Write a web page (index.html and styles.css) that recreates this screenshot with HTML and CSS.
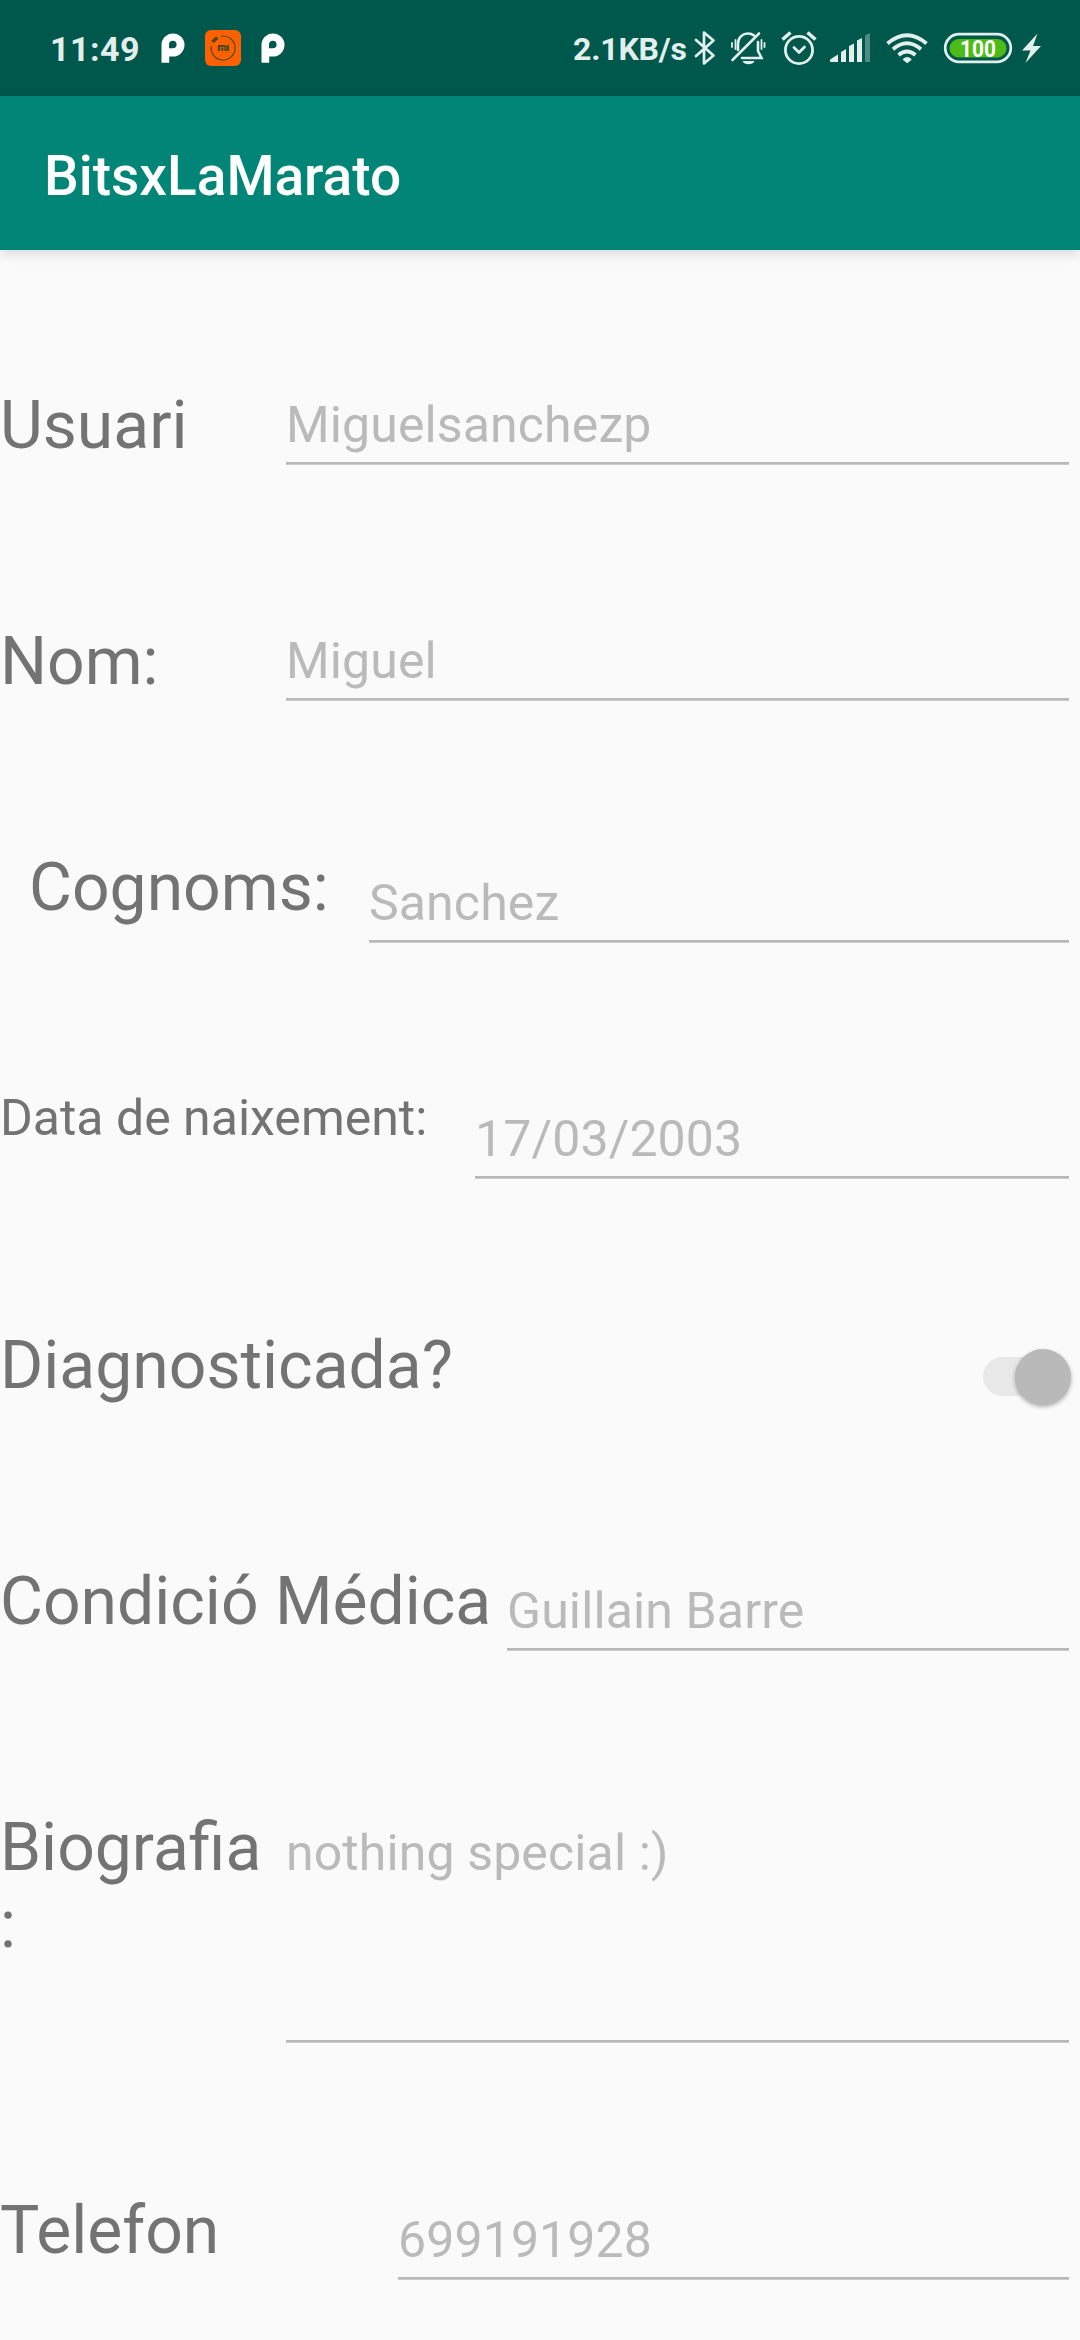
FILE: index.html
```html
<!DOCTYPE html>
<html lang="ca">
<head>
<meta charset="utf-8">
<title>BitsxLaMarato</title>
<link rel="stylesheet" href="styles.css">
</head>
<body>
<header class="status">
  <div class="status-left">
    <span class="clock">11:49</span>
    <svg class="icon" width="50" height="96" viewBox="150 0 50 96"><path fill="#fff" fill-rule="evenodd" d="M161.500 62.800V45a11.500 11.500 0 1 1 11.500 11.500h-3.800v6.300zM172.800 40.700a3.800 3.800 0 0 0-3.800 3.800v3.800h3.800a3.800 3.800 0 0 0 0-7.600z"/></svg>
    <svg class="icon" width="50" height="96" viewBox="200 0 50 96"><rect x="205" y="30" width="36" height="36" rx="6" fill="#ff6100"/><g fill="none" stroke="#4c4a20"><path stroke-width="1.200" d="M221 36.200A12 12 0 1 1 211.300 46"/><path stroke-width="3.400" d="M212.500 42l4.800-4.500"/><path stroke-width="2.200" d="M219 51v-5h5.500q1 0 1 1v4M222.300 47.500v3.500M228 45v6"/></g></svg>
    <svg class="icon" width="50" height="96" viewBox="250 0 50 96"><path fill="#fff" fill-rule="evenodd" d="M261.500 62.800V45a11.500 11.500 0 1 1 11.500 11.500h-3.800v6.300zM272.800 40.700a3.800 3.800 0 0 0-3.800 3.800v3.800h3.800a3.800 3.800 0 0 0 0-7.600z"/></svg>
  </div>
  <div class="status-right">
    <span class="speed">2.1KB/s</span>
    <svg class="icon" width="34" height="96" viewBox="688 0 34 96"><path fill="none" stroke="#e2efed" stroke-width="2.700" stroke-linejoin="round" stroke-linecap="round" d="M696 40l17.500 15.500-9.500 8V32.500l9.500 8L696 56"/></svg>
    <svg class="icon" width="52" height="96" viewBox="722 0 52 96"><g fill="none" stroke="#e2efed" stroke-width="2.600" stroke-linecap="round"><path d="M732.500 60l26.500-26.500M738 50v-6c0-7 5-10.500 10-10.500 2.500 0 4.500.7 6 2M758 42v9l3.500 7H742"/><path stroke-width="1.800" d="M735.500 40v9M732 43v4M761.500 40v9M764.500 43v4"/></g><path fill="#e2efed" d="M742.500 61h12q-1.500 3.300-6 3.300t-6-3.300z"/></svg>
    <svg class="icon" width="52" height="96" viewBox="774 0 52 96"><g fill="none" stroke="#e2efed" stroke-width="2.800"><circle cx="799" cy="50" r="13.600"/><path stroke-linecap="round" stroke-linejoin="round" d="M794 47.500l5 5 5.500-5.500"/><path stroke-width="3.600" d="M782.500 39.500l8-7M807.500 32.500l8 7"/></g></svg>
    <svg class="icon" width="52" height="96" viewBox="826 0 52 96"><g fill="#e2efed"><path d="M830 62v-2.500l8-5V62zM841 62V52l5-3v13zM849 62V46l5-2.500V62zM857 62V40.500l5-2.500v24z"/><path opacity=".35" d="M865 62V35.500l5-2.500v29z"/></g></svg>
    <svg class="icon" width="56" height="96" viewBox="878 0 56 96"><g fill="none" stroke="#e2efed" stroke-width="3.800"><path d="M887.500 43.500q19.500-16.500 39 0M893 49.200q14-12 28 0M898.500 55q8.500-7 17 0"/></g><path fill="#e2efed" d="M903 59q4.200-4 8.400 0v1l-4.200 3.300-4.200-3.300z"/></svg>
    <svg class="icon" width="84" height="96" viewBox="934 0 84 96"><rect x="945.200" y="34.200" width="65.600" height="27.600" rx="13.800" fill="none" stroke="#e2efed" stroke-width="2.700"/><rect x="949.500" y="39" width="57" height="18.500" rx="9.250" fill="#4cbb17"/><text class="charge" x="960" y="56.900" textLength="36" lengthAdjust="spacingAndGlyphs">100</text></svg>
    <svg class="icon" width="62" height="96" viewBox="1018 0 62 96"><path fill="#e2efed" d="M1037.500 33.500L1022 50.500h8.500l-5 12.500L1041 46h-8z"/></svg>
  </div>
</header>
<div class="appbar"><h1 class="title">BitsxLaMarato</h1></div>
<main class="form">
  <div class="row usuari"><div class="label">Usuari</div><div class="field">Miguelsanchezp</div></div>
  <div class="row nom"><div class="label">Nom:</div><div class="field">Miguel</div></div>
  <div class="row cognoms"><div class="label">Cognoms:</div><div class="field">Sanchez</div></div>
  <div class="row data"><div class="label small">Data de naixement:</div><div class="field">17/03/2003</div></div>
  <div class="row diagnosi"><div class="label">Diagnosticada?</div><div class="switch"><div class="thumb"></div></div></div>
  <div class="row condicio"><div class="label">Condició Médica</div><div class="field">Guillain Barre</div></div>
  <div class="row bio"><div class="label">Biografia<br>:</div><div class="field">nothing special :)</div></div>
  <div class="row telefon"><div class="label">Telefon</div><div class="field">699191928</div></div>
</main>
</body>
</html>
```
FILE: styles.css
```css
* { box-sizing: border-box; }

body {
  margin: 0;
  width: 1080px;
  height: 2340px;
  overflow: hidden;
  background: #fafafa;
  font-family: Roboto, "Liberation Sans", sans-serif;
}

.status {
  display: flex;
  justify-content: space-between;
  height: 96px;
  background: #00574b;
  color: #e2efed;
  font-weight: 700;
}

.status-left,
.status-right { display: flex; }

.icon { display: block; flex: none; }

.clock {
  width: 150px;
  padding-left: 50px;
  font-size: 34px;
  line-height: 98px;
  letter-spacing: 0.5px;
}

.speed {
  width: 115px;
  font-size: 32px;
  line-height: 98px;
  letter-spacing: -0.2px;
  white-space: nowrap;
}

.charge {
  fill: #fff;
  font-size: 24.5px;
  font-weight: 700;
}

.appbar {
  height: 154px;
  padding-left: 44px;
  background: #008577;
  box-shadow: 0 4px 12px rgba(0, 0, 0, 0.13);
}

.title {
  margin: 0;
  color: #fff;
  font-size: 55px;
  font-weight: 500;
  line-height: 160px;
}

.form { padding: 137px 11px 0 0; }

.row {
  display: flex;
  align-items: flex-start;
}

.label {
  flex: none;
  width: 286px;
  color: #737373;
  font-size: 66px;
  line-height: 77px;
  white-space: nowrap;
}

.label.small {
  font-size: 50px;
  line-height: 58px;
}

.field {
  flex: 1;
  height: 69px;
  color: #bababa;
  font-size: 50px;
  line-height: 58px;
  letter-spacing: 0.12px;
  border-bottom: 2px solid #b8b8b8;
  box-shadow: 0 1px 0 #cacaca;
}

.field { height: 68px; }

.usuari { height: 236px; }
.usuari .field,
.nom .field { margin-top: 9px; }

.nom { height: 226px; }

.cognoms { height: 240px; }
.cognoms .label { width: 369px; padding-left: 29px; }
.cognoms .field { margin-top: 25px; }

.data { height: 238px; }
.data .label { width: 475px; }
.data .field { margin-top: 21px; }

.diagnosi { height: 236px; justify-content: space-between; }

.switch {
  display: flex;
  justify-content: flex-end;
  align-items: center;
  width: 86px;
  height: 39px;
  margin-top: 30px;
  border-radius: 20px;
  background: #e8e8e8;
}

.thumb {
  width: 56px;
  height: 56px;
  margin-right: -2px;
  flex: none;
  border-radius: 50%;
  background: #b9b9b9;
  box-shadow: 0 2px 4px rgba(0, 0, 0, 0.3);
}

.condicio { height: 246px; }
.condicio .label { width: 507px; }
.condicio .field { margin-top: 19px; }

.bio { height: 383px; }
.bio .field { height: 218px; margin-top: 15px; }

.telefon .label { width: 398px; }
.telefon .field { margin-top: 19px; }
```
